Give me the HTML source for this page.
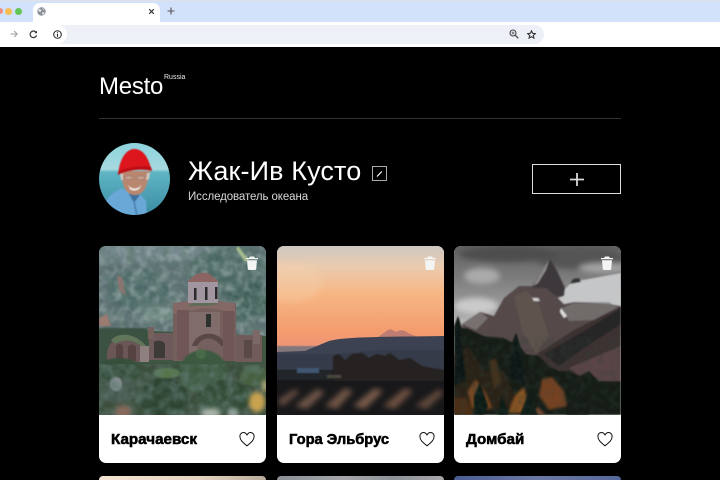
<!DOCTYPE html>
<html lang="ru"><head><meta charset="utf-8"><title>Mesto</title>
<style>
html,body{margin:0;padding:0;width:720px;height:480px;overflow:hidden;background:#000;font-family:"Liberation Sans","Noto Sans CJK SC",sans-serif}
#p{position:relative;width:720px;height:480px;overflow:hidden;background:#000}
.a{position:absolute}
.card{position:absolute;top:246px;width:167px;height:217px;border-radius:7px;overflow:hidden;background:#fff}
.card svg.img{position:absolute;left:0;top:0;width:167px;height:169px;display:block}
.t{position:absolute;top:184px;left:12px;font-size:15px;line-height:19px;font-weight:700;color:#000;white-space:nowrap;-webkit-text-stroke:.55px #000}
.h{position:absolute;top:186px;width:16px;height:15px}
.tr{position:absolute;top:10px;width:12px;height:14px}
.st{position:absolute;top:476px;width:167px;height:4px;border-radius:7px 7px 0 0}
</style></head><body><div id="p">
<div class="a" style="left:0;top:0;width:720px;height:22px;background:#d3e2fb"></div>
<div class="a" style="left:0;top:0;width:720px;height:1px;background:#dfe1e8"></div>
<div class="a" style="left:0;top:22px;width:720px;height:25px;background:#fff"></div>
<div class="a" style="left:-3px;top:8px;width:6px;height:6px;border-radius:50%;background:#f08f80"></div>
<div class="a" style="left:5px;top:8px;width:7px;height:7px;border-radius:50%;background:#f6bd4f"></div>
<div class="a" style="left:15px;top:8px;width:7px;height:7px;border-radius:50%;background:#60c554"></div>
<div class="a" style="left:33px;top:3px;width:127px;height:19px;background:#fff;border-radius:7px 7px 0 0"></div>
<svg class="a" style="left:37px;top:7px" width="9" height="9" viewBox="0 0 9 9"><circle cx="4.500" cy="4.500" r="4.200" fill="#8b9097"/><path d="M2 1.500 L4.500 3 L3.500 5 L1.200 4 Z M5.500 5 L7.800 5.500 L6 8 L5 7Z M5.500 .8 L7.500 2.500 L6 3Z" fill="#e4e7ec"/></svg>
<svg class="a" style="left:148px;top:8px" width="7" height="7" viewBox="0 0 7 7"><path d="M1.200 1.200L5.800 5.800M5.800 1.200L1.200 5.800" stroke="#333" stroke-width="1.100"/></svg>
<svg class="a" style="left:167px;top:7px" width="8" height="8" viewBox="0 0 8 8"><path d="M4 .5V7.500M.5 4H7.500" stroke="#555" stroke-width="1.100"/></svg>
<svg class="a" style="left:10px;top:30px" width="8" height="8" viewBox="0 0 8 8"><path d="M.5 4H7M4.200 1L7.200 4L4.200 7" fill="none" stroke="#9a9ca0" stroke-width="1"/></svg>
<svg class="a" style="left:29px;top:30px" width="9" height="9" viewBox="0 0 9 9"><path d="M7.600 5.300A3.300 3.300 0 1 1 6.800 2" fill="none" stroke="#333" stroke-width="1.200"/><path d="M8 .6V3.200H5.400Z" fill="#333"/></svg>
<div class="a" style="left:49px;top:25px;width:495px;height:19px;border-radius:10px;background:#edf0f7"></div>
<div class="a" style="left:48px;top:25px;width:19px;height:19px;border-radius:50%;background:#fff"></div>
<svg class="a" style="left:53px;top:30px" width="9" height="9" viewBox="0 0 9 9"><circle cx="4.500" cy="4.500" r="3.800" fill="none" stroke="#222" stroke-width="1"/><path d="M4.500 4V6.800M4.500 2.200V3.200" stroke="#222" stroke-width="1.100"/></svg>
<svg class="a" style="left:509px;top:29px" width="10" height="10" viewBox="0 0 10 10"><circle cx="4" cy="4" r="3" fill="none" stroke="#444" stroke-width="1.100"/><path d="M6.300 6.300L9.300 9.300" stroke="#444" stroke-width="1.300"/><path d="M2.500 4H5.500M4 2.500V5.500" stroke="#444" stroke-width=".8"/></svg>
<svg class="a" style="left:527px;top:29.500px" width="9" height="9" viewBox="0 0 9 9"><path d="M4.500 .8L5.600 3.300L8.300 3.600L6.300 5.400L6.900 8.100L4.500 6.700L2.100 8.100L2.700 5.400L.7 3.600L3.400 3.300Z" fill="none" stroke="#333" stroke-width="1.100"/></svg>

<div class="a" style="left:99px;top:72px;font-size:24px;line-height:29px;color:#fff;letter-spacing:-.25px">Mesto</div>
<div class="a" style="left:164px;top:73px;font-size:7px;line-height:10px;color:#eee">Russia</div>
<div class="a" style="left:99px;top:118px;width:522px;height:1px;background:#333335"></div>

<svg class="a" style="left:99px;top:143px" width="72" height="73" viewBox="0 0 72 73">
<defs><clipPath id="av"><ellipse cx="35.500" cy="36" rx="35.500" ry="36"/></clipPath><linearGradient id="avg" x1="0" y1="0" x2="0" y2="1"><stop offset="0" stop-color="#8ed3dd"/><stop offset=".36" stop-color="#a5d9de"/><stop offset=".4" stop-color="#5fb5c3"/><stop offset="1" stop-color="#3a8ba2"/></linearGradient><filter id="avb"><feGaussianBlur stdDeviation=".6"/></filter></defs>
<g clip-path="url(#av)"><rect width="72" height="73" fill="url(#avg)"/>
<g filter="url(#avb)">
<path d="M3 73C4 57 12 50 23 45L31 51L42 52L47 58L48 73Z" fill="#6ba8d8"/>
<path d="M29 49L35 60L41 52Z" fill="#3f6f9c"/>
<path d="M35 58L38 73" stroke="#4d86b8" stroke-width="2"/>
<path d="M21 28C21 34 23 37 24 40C25 47 30 52 36 52C43 52 47 46 48 40C50 36 51 33 51 28Z" fill="#b9876f"/>
<path d="M21 29L22 37L24 37L24 31ZM48 30L51 30L50 36L47 37Z" fill="#cfcac2"/>
<path d="M25 34.500C27 32.500 32 32.500 34 34.500C33 37.500 27 37.500 25 34.500ZM37 34.500C39 32.500 44 32.500 46 34.500C45 37.500 39 37.500 37 34.500Z" fill="#c9a08e" stroke="#8a7468" stroke-width=".6"/>
<path d="M29 42C33 47 39 47 43 41L40 46C37 48 33 48 31 46Z" fill="#f3eee8"/>
<path d="M19 32C20 21 24 8 34 6C46 5 50 18 53 28C43 25 29 27 19 32Z" fill="#dc161d"/>
<path d="M19 32C29 27 43 25 53 28L52 24C42 22 29 24 20 28Z" fill="#bd1117"/>
</g></g></svg>

<div class="a" style="left:188px;top:155px;font-size:27px;line-height:32px;color:#fff;letter-spacing:.13px;white-space:nowrap">Жак-Ив Кусто</div>
<svg class="a" style="left:372px;top:165.500px" width="16" height="16" viewBox="0 0 16 16"><rect x=".5" y=".5" width="14" height="14" fill="none" stroke="#aaa" stroke-width="1"/><path d="M5 10.500L9.800 5.500" stroke="#fff" stroke-width="1.200"/></svg>
<div class="a" style="left:188px;top:190px;font-size:11.500px;line-height:15px;color:#d8d8d8;white-space:nowrap;letter-spacing:-.1px">Исследователь океана</div>
<div class="a" style="left:532px;top:164px;width:87px;height:28px;border:1px solid #ddd"></div>
<svg class="a" style="left:570px;top:173px" width="14" height="13" viewBox="0 0 14 13"><path d="M7 0V13M0 6.500H14" stroke="#d8d8d8" stroke-width="1.800"/></svg>

<!-- Card 1 -->
<div class="card" style="left:99px">
<svg class="img" viewBox="0 0 167 169">
<defs><filter id="b1"><feGaussianBlur stdDeviation="2.500"/></filter><filter id="b2"><feGaussianBlur stdDeviation=".8"/></filter><filter id="b0"><feGaussianBlur stdDeviation=".35"/></filter>
<filter id="tx" x="0" y="0" width="100%" height="100%"><feTurbulence type="fractalNoise" baseFrequency=".11" numOctaves="3" seed="4"/><feColorMatrix values="0 0 0 0 .12  0 0 0 0 .2  0 0 0 0 .18  2.200 0 0 0 -.75"/><feGaussianBlur stdDeviation=".8"/></filter>
<filter id="tl" x="0" y="0" width="100%" height="100%"><feTurbulence type="fractalNoise" baseFrequency=".13" numOctaves="2" seed="9"/><feColorMatrix values="0 0 0 0 .55  0 0 0 0 .62  0 0 0 0 .64  0 2 0 0 -.85"/><feGaussianBlur stdDeviation=".8"/></filter></defs>
<rect width="167" height="169" fill="#5c6f72"/>
<g filter="url(#b1)"><ellipse cx="35" cy="6" rx="80" ry="10" fill="#75878d"/><ellipse cx="130" cy="25" rx="40" ry="25" fill="#4c6863"/><ellipse cx="40" cy="45" rx="30" ry="22" fill="#4e6a68"/><ellipse cx="150" cy="55" rx="22" ry="22" fill="#3f5f58"/><ellipse cx="62" cy="68" rx="18" ry="7" fill="#7d988f"/></g>
<rect width="167" height="90" filter="url(#tx)"/><rect width="167" height="90" filter="url(#tl)" opacity=".5"/>
<path d="M18 30L23 31L27 50L20 44Z" fill="#8b746f" filter="url(#b2)"/><path d="M0 72L8 68L12 80H0Z" fill="#9c7a70" filter="url(#b2)"/>
<path d="M139 0L150 14L146 16L137 3Z" fill="#a6bb8d" filter="url(#b2)"/>
<path d="M0 84L30 84L167 90V169H0Z" fill="#3f5643"/>
<rect x="0" y="82" width="48" height="34" fill="#3b5142" filter="url(#b2)"/>
<g filter="url(#b0)">
<path d="M8 113C7 100 13 92 27 89C38 91 47 98 49 104L50 116H9Z" fill="#6a5656"/>
<path d="M12 94C20 86 36 86 48 101L44 102C36 94 26 92 16 98Z" fill="#60745a"/>
<path d="M17 101C17 97 24 97 24 101V114H17ZM29 102C29 97 37 98 37 102V115H29Z" fill="#57423f"/>
<path d="M41 100H50V116H41Z" fill="#8f8080"/>
<path d="M50 87H76V114H50Z" fill="#6e5a5a"/><rect x="49" y="81" width="6" height="12" fill="#75605c"/><path d="M55 96C57 94 64 94 66 98V112H55Z" fill="#3d3b37"/>
<path d="M136 89H163V116H136Z" fill="#6f5a5a"/><path d="M154 84H161V98H154Z" fill="#7c6866"/><path d="M145 94H153V112H145Z" fill="#584847"/>
<path d="M74 57H137V115H74Z" fill="#755e5d"/>
<path d="M74 57L104 53L136 57V66L106 62L74 68Z" fill="#836866"/>
<path d="M88 60L104 52L120 58L106 60Z" fill="#5f6c57"/>
<path d="M90 66H121V114H90Z" fill="#806c6a"/>
<rect x="107" y="68" width="5" height="13" fill="#2e332f"/>
<path d="M93 100C98 84 120 83 128 100L122 100C114 90 104 90 98 100Z" fill="#5a4746"/>
<path d="M98 100C104 90 114 90 122 100V115H98Z" fill="#745f5e"/>
<rect x="78" y="64" width="12" height="50" fill="#6f5757"/><rect x="124" y="65" width="11" height="50" fill="#6f5757"/>
<path d="M89 35H119V57H89Z" fill="#a196a0"/>
<rect x="95" y="42" width="2.500" height="12" fill="#2a2c2c"/><rect x="106" y="41" width="2.500" height="13" fill="#2a2c2c"/><rect x="116" y="41" width="2.500" height="12" fill="#2a2c2c"/>
<path d="M88 36L96 29C101 26 108 26 112 29L120 36Z" fill="#8c6564"/>
</g>
<g filter="url(#b2)"><rect y="118" width="167" height="51" fill="#3c503e"/><ellipse cx="20" cy="124" rx="22" ry="12" fill="#34503a"/><ellipse cx="68" cy="127" rx="13" ry="5" fill="#557549"/><ellipse cx="104" cy="126" rx="24" ry="22" fill="#3c5a40"/><circle cx="102" cy="108" r="5" fill="#4a6b48"/><ellipse cx="65" cy="152" rx="24" ry="20" fill="#2d4433"/><ellipse cx="125" cy="152" rx="26" ry="18" fill="#334b35"/><ellipse cx="20" cy="145" rx="16" ry="14" fill="#45564c"/><ellipse cx="17" cy="138" rx="6" ry="7" fill="#838c8e"/><ellipse cx="155" cy="130" rx="14" ry="10" fill="#46603f"/></g>
<rect y="118" width="167" height="51" filter="url(#tx)" opacity=".7"/>
<g filter="url(#b1)"><ellipse cx="158" cy="156" rx="8" ry="10" fill="#c9a24f"/><ellipse cx="112" cy="167" rx="10" ry="5" fill="#a8b2a8"/><ellipse cx="134" cy="167" rx="6" ry="5" fill="#94a29c"/><ellipse cx="24" cy="166" rx="8" ry="7" fill="#866a5c"/><ellipse cx="166" cy="140" rx="3" ry="6" fill="#b7ad78"/></g>
</svg>
<svg class="tr" style="left:147px" viewBox="0 0 12 14"><path d="M4 .5H8L9 2H12V3.300H0V2H3ZM1 4.200H11L10.200 13.300Q10 14 9 14H3Q2 14 1.800 13.300Z" fill="#f4f4f4"/></svg>
<div class="t" style="font-size:15.200px">Карачаевск</div>
<svg class="h" style="left:140px" viewBox="0 0 16 15"><path d="M8 13.800C3 9.800 1 7.700 1 5A3.600 3.600 0 0 1 8 3.300A3.600 3.600 0 0 1 15 5C15 7.700 13 9.800 8 13.800Z" fill="none" stroke="#111" stroke-width="1"/></svg>
</div>

<!-- Card 2 -->
<div class="card" style="left:277px">
<svg class="img" viewBox="0 0 167 169">
<defs><linearGradient id="sky" x1="0" y1="0" x2="0" y2="1"><stop offset="0" stop-color="#cdc7c2"/><stop offset=".2" stop-color="#ebcbae"/><stop offset=".45" stop-color="#f6b684"/><stop offset=".8" stop-color="#f49d6e"/><stop offset="1" stop-color="#ec9279"/></linearGradient><filter id="b3"><feGaussianBlur stdDeviation="3"/></filter><filter id="b4"><feGaussianBlur stdDeviation=".6"/></filter></defs>
<rect width="167" height="106" fill="url(#sky)"/>
<ellipse cx="15" cy="36" rx="30" ry="20" fill="#f6d3ae" opacity=".35" filter="url(#b3)"/>
<path d="M101 91L111 84C114 82 117 85 119 86C123 83 128 84 131 87L141 91Z" fill="#bd7d72"/>
<rect y="100" width="40" height="8" fill="#84777b" filter="url(#b4)"/>
<path d="M0 106L28 105L52 95C70 90 120 91 167 90V169H0Z" fill="#3c4251"/>
<path d="M0 108H60L100 104H167V126H0Z" fill="#363b49" filter="url(#b4)"/>
<path d="M0 124H167V169H0Z" fill="#18181a"/>
<g filter="url(#b4)"><path d="M56 128V110L62 108L68 114L75 108L85 107L92 112L100 108L108 110L113 107L122 114L133 112L145 120L167 124V135H56Z" fill="#252220"/><path d="M0 124H55V134H0Z" fill="#24272a"/><rect x="20" y="122" width="22" height="5" fill="#3f5570"/><rect x="50" y="129" width="14" height="3" fill="#4a463c"/></g>
<g filter="url(#b3)"><path d="M0 155L18 143L22 146L6 160Z" fill="#6b5042"/><path d="M18 160L40 143L48 146L30 163Z" fill="#6e5446"/><path d="M48 160L68 142L76 145L60 163Z" fill="#6f5545"/><path d="M76 160L98 142L106 145L88 163Z" fill="#785a48"/><path d="M106 160L128 142L136 145L118 163Z" fill="#6c5040"/><path d="M138 160L162 143L167 147L150 163Z" fill="#61483a"/></g>
</svg>
<svg class="tr" style="left:147px" viewBox="0 0 12 14"><path d="M4 .5H8L9 2H12V3.300H0V2H3ZM1 4.200H11L10.200 13.300Q10 14 9 14H3Q2 14 1.800 13.300Z" fill="#f4f4f4"/></svg>
<div class="t" style="font-size:14.700px;top:185px">Гора Эльбрус</div>
<svg class="h" style="left:142px" viewBox="0 0 16 15"><path d="M8 13.800C3 9.800 1 7.700 1 5A3.600 3.600 0 0 1 8 3.300A3.600 3.600 0 0 1 15 5C15 7.700 13 9.800 8 13.800Z" fill="none" stroke="#111" stroke-width="1"/></svg>
</div>

<!-- Card 3 -->
<div class="card" style="left:454px">
<svg class="img" viewBox="0 0 167 169">
<defs><linearGradient id="sk3" x1="0" y1="0" x2="0" y2="1"><stop offset="0" stop-color="#606060"/><stop offset=".35" stop-color="#7c7c7c"/><stop offset=".75" stop-color="#a4a4a4"/><stop offset="1" stop-color="#cfcfcf"/></linearGradient><filter id="b5"><feGaussianBlur stdDeviation="3"/></filter><filter id="b6"><feGaussianBlur stdDeviation=".7"/></filter><filter id="b7"><feGaussianBlur stdDeviation="1.300"/></filter>
<filter id="tx3" x="0" y="0" width="100%" height="100%"><feTurbulence type="fractalNoise" baseFrequency=".16" numOctaves="2" seed="3"/><feColorMatrix values="0 0 0 0 .03  0 0 0 0 .05  0 0 0 0 .04  2 0 0 0 -.8"/><feGaussianBlur stdDeviation=".8"/></filter></defs>
<rect width="167" height="90" fill="url(#sk3)"/>
<g filter="url(#b5)"><ellipse cx="28" cy="30" rx="18" ry="8" fill="#aaa"/><ellipse cx="125" cy="12" rx="45" ry="11" fill="#555"/><ellipse cx="55" cy="8" rx="50" ry="8" fill="#4e4e4e"/><ellipse cx="150" cy="22" rx="25" ry="5" fill="#a4a4a4"/><ellipse cx="22" cy="60" rx="22" ry="8" fill="#cacaca"/></g>
<g filter="url(#b6)">
<path d="M102 52L118 36L140 32L167 27V64L155 56L120 56L110 70L105 60Z" fill="#c4c6c8"/>
<path d="M116 38L119 33L125 32L127 36Z" fill="#333"/>
<path d="M8 78L26 66L40 70L50 52L65 40L78 40L89 24L96 13L103 25L111 42L110 50L104 52L110 58L120 56L155 58L167 60V130H85L8 90Z" fill="#544a48"/>
<path d="M110 50L111 42L103 25L96 13L91 26L78 42L92 42L102 50Z" fill="#3c383a"/>
<path d="M79 40L89 24L95 14L92 24L84 37Z" fill="#8e8b8b"/>
<path d="M108 62L120 57L155 58L167 62L140 74L115 75Z" fill="#6f6c6a"/>
<path d="M60 50L72 45L84 55L95 90L82 108L68 85Z" fill="#5f524e"/>
<path d="M8 78L26 66L34 72L22 84Z" fill="#77716f"/>
<path d="M107 62L113 70L110 72L106 66Z" fill="#ddd"/>
<path d="M78 52H84L86 55H80Z" fill="#ccc"/>
<path d="M80 110L120 84L167 60V169H80Z" fill="#3d3231"/>
<path d="M115 122L167 100V135H135Z" fill="#5c4546"/>
<path d="M90 108L135 82L167 62V78L130 102L105 120Z" fill="#272526"/>
<path d="M0 80L4 70L8 82L13 82L30 90L50 92L58 96L62 87L66 100L72 108L85 110L95 120L105 125L115 125L125 130L135 125L145 135L167 135V169H0Z" fill="#181c16"/>
</g>
<g filter="url(#b7)">
<path d="M0 110L14 100L30 125L50 125L65 160L0 169Z" fill="#2a2116"/>
<path d="M14 145L22 134L32 148L38 162H18Z" fill="#7a4820"/>
<path d="M35 115L42 112L47 135L40 143Z" fill="#43321e"/>
<path d="M54 167L62 148L70 141L74 155L76 167Z" fill="#875224"/>
<path d="M85 150L88 133L98 131L110 145L113 160L95 164Z" fill="#754320"/>
<path d="M76 169L84 161L92 169Z" fill="#7d4a30"/>
<path d="M0 152H12L20 169H0Z" fill="#4d2f19"/>
</g>
<g filter="url(#b6)">
<path d="M20 150L26 136L34 160L30 169H20Z" fill="#111a15"/>
<path d="M66 169L74 148L84 169Z" fill="#111a15"/>
<path d="M44 169L48 148L54 169Z" fill="#111a15"/>
<path d="M112 169L122 138L135 169Z" fill="#141d18"/>
<path d="M58 110L62 87L68 110L70 140L56 130Z" fill="#0e1712"/>
<path d="M2 100L4 70L8 100L12 135L0 140Z" fill="#0e1712"/>
</g>
<rect y="90" width="167" height="79" filter="url(#tx3)" opacity=".45"/>
</svg>
<svg class="tr" style="left:147px" viewBox="0 0 12 14"><path d="M4 .5H8L9 2H12V3.300H0V2H3ZM1 4.200H11L10.200 13.300Q10 14 9 14H3Q2 14 1.800 13.300Z" fill="#f4f4f4"/></svg>
<div class="t" style="font-size:15.200px">Домбай</div>
<svg class="h" style="left:143px" viewBox="0 0 16 15"><path d="M8 13.800C3 9.800 1 7.700 1 5A3.600 3.600 0 0 1 8 3.300A3.600 3.600 0 0 1 15 5C15 7.700 13 9.800 8 13.800Z" fill="none" stroke="#111" stroke-width="1"/></svg>
</div>

<div class="st" style="left:99px;background:linear-gradient(90deg,#f4e3d2,#e4d3c0 60%,#b9ab9b)"></div>
<div class="st" style="left:277px;background:linear-gradient(90deg,#8b8f96,#a3a5aa 40%,#8e9198 70%,#a6a7ab)"></div>
<div class="st" style="left:454px;background:linear-gradient(90deg,#4a5c93,#6b78a3 50%,#56689a)"></div>
</div></body></html>
